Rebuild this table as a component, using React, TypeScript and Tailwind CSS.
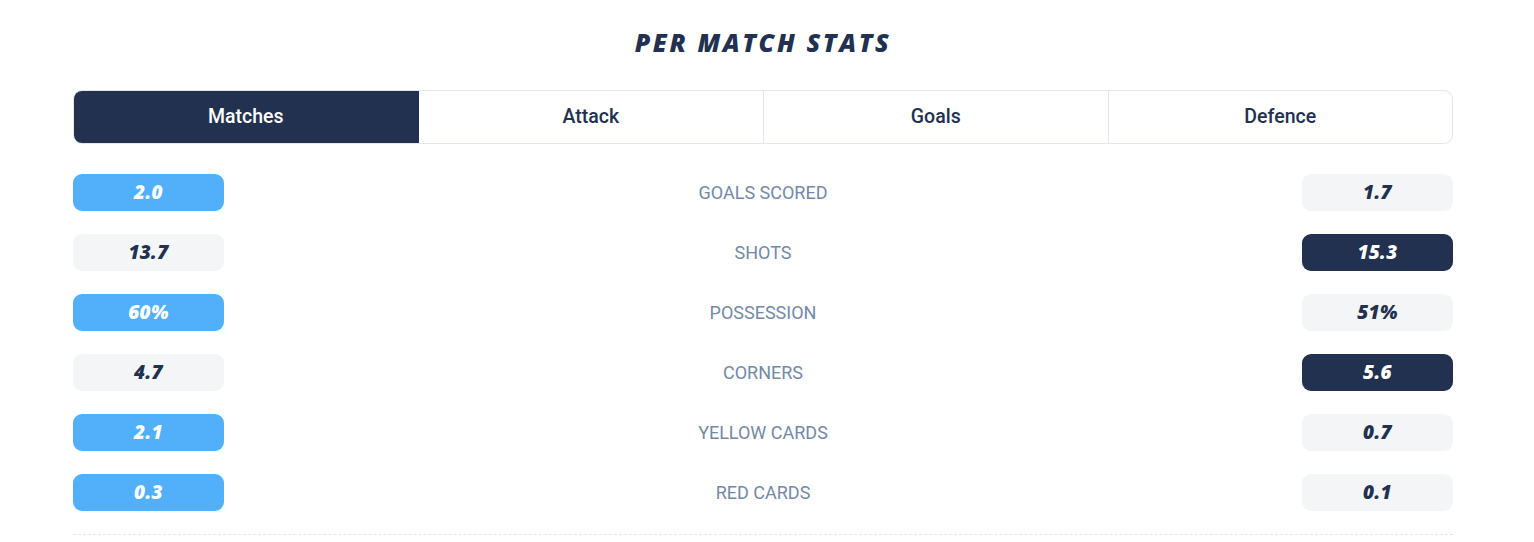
const tabs = ['Matches', 'Attack', 'Goals', 'Defence'];

type Tone = 'blue' | 'gray' | 'navy';

const rows: { label: string; home: string; homeTone: Tone; away: string; awayTone: Tone }[] = [
  { label: 'GOALS SCORED', home: '2.0', homeTone: 'blue', away: '1.7', awayTone: 'gray' },
  { label: 'SHOTS', home: '13.7', homeTone: 'gray', away: '15.3', awayTone: 'navy' },
  { label: 'POSSESSION', home: '60%', homeTone: 'blue', away: '51%', awayTone: 'gray' },
  { label: 'CORNERS', home: '4.7', homeTone: 'gray', away: '5.6', awayTone: 'navy' },
  { label: 'YELLOW CARDS', home: '2.1', homeTone: 'blue', away: '0.7', awayTone: 'gray' },
  { label: 'RED CARDS', home: '0.3', homeTone: 'blue', away: '0.1', awayTone: 'gray' },
];

const toneClass: Record<Tone, string> = {
  blue: 'bg-[#52b0fa] text-white',
  gray: 'bg-[#f4f5f7] text-[#21314f]',
  navy: 'bg-[#21314f] text-white',
};

function Pill({ value, tone }: { value: string; tone: Tone }) {
  return (
    <div
      className={`w-[151px] h-[37px] rounded-[9px] flex items-center justify-center text-[19px] font-extrabold italic tracking-[0.3px] font-['Open_Sans',sans-serif] ${toneClass[tone]}`}
    >
      {value}
    </div>
  );
}

export default function App() {
  return (
    <div className="min-h-screen bg-white">
      <div className="mx-[73px] w-[1380px]">
        {/* Title */}
        <h2 className="pt-[26px] h-[90px] text-center text-[25px] leading-[32px] font-extrabold italic text-[#21314f] font-['Open_Sans',sans-serif] tracking-[2.6px]">
          PER MATCH STATS
        </h2>

        {/* Tabs */}
        <div className="grid grid-cols-4 h-[54px] rounded-[9px] border border-[#e3e6ee] overflow-hidden font-['Roboto',sans-serif]">
          {tabs.map((t, i) => (
            <div
              key={t}
              className={`flex items-center justify-center text-[19.5px] font-medium ${
                i === 0 ? 'bg-[#21314f] text-white -m-px mr-0' : 'text-[#21314f]'
              } ${i > 1 ? 'border-l border-[#e3e6ee]' : ''}`}
            >
              {t}
            </div>
          ))}
        </div>

        {/* Rows */}
        <div className="pt-[30px] flex flex-col gap-[23px]">
          {rows.map((r) => (
            <div key={r.label} className="flex items-center justify-between h-[37px]">
              <Pill value={r.home} tone={r.homeTone} />
              <div className="flex-1 text-center text-[18px] text-[#7489a7] font-['Roboto',sans-serif]">
                {r.label}
              </div>
              <Pill value={r.away} tone={r.awayTone} />
            </div>
          ))}
        </div>

        <div className="mt-[23px] border-t border-dashed border-[#e3e6ee]" />
      </div>
    </div>
  );
}
